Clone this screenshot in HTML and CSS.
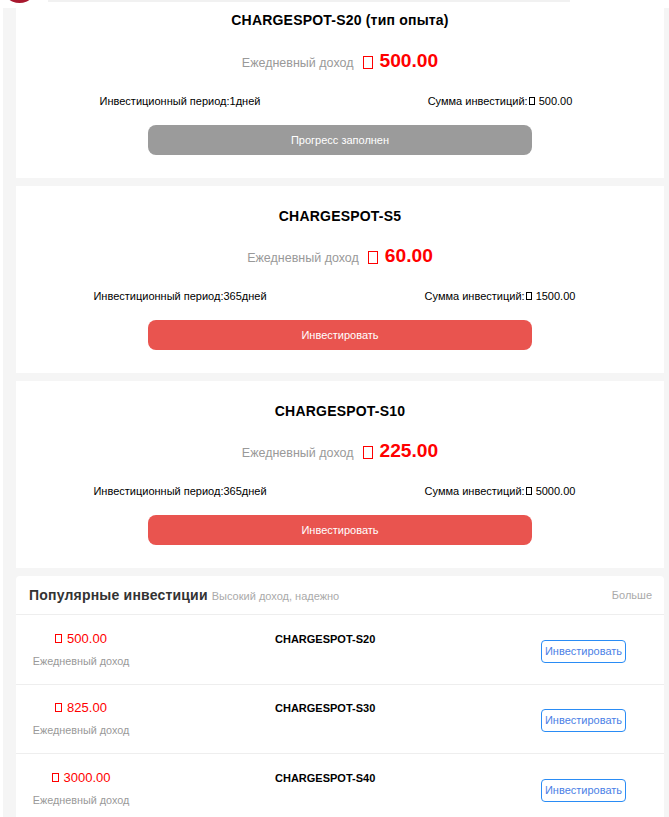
FILE: index.html
```html
<!DOCTYPE html>
<html lang="ru">
<head>
<meta charset="utf-8">
<title>Инвестиции</title>
<link rel="stylesheet" href="styles.css">
</head>
<body>
<header class="topbar">
  <span class="logo"></span>
  <span class="search"></span>
</header>
<main class="list">
  <section class="card product first">
    <div class="title">CHARGESPOT-S20 (тип опыта)</div>
    <div class="income"><span class="income-label">Ежедневный доход</span><span class="tofu"></span><span class="income-value">500.00</span></div>
    <div class="terms"><span>Инвестиционный период:1дней</span><span>Сумма инвестиций:<span class="tofu small"></span>500.00</span></div>
    <div class="btn done">Прогресс заполнен</div>
  </section>
  <section class="card product">
    <div class="title">CHARGESPOT-S5</div>
    <div class="income"><span class="income-label">Ежедневный доход</span><span class="tofu"></span><span class="income-value">60.00</span></div>
    <div class="terms"><span>Инвестиционный период:365дней</span><span>Сумма инвестиций:<span class="tofu small"></span>1500.00</span></div>
    <div class="btn">Инвестировать</div>
  </section>
  <section class="card product">
    <div class="title">CHARGESPOT-S10</div>
    <div class="income"><span class="income-label">Ежедневный доход</span><span class="tofu"></span><span class="income-value">225.00</span></div>
    <div class="terms"><span>Инвестиционный период:365дней</span><span>Сумма инвестиций:<span class="tofu small"></span>5000.00</span></div>
    <div class="btn">Инвестировать</div>
  </section>
  <section class="card popular">
    <div class="pop-head">
      <div class="pop-title"><span class="pop-main">Популярные инвестиции</span><span class="pop-sub">Высокий доход, надежно</span></div>
      <span class="pop-more">Больше</span>
    </div>
    <div class="pop-row">
      <div class="pop-income"><div class="pop-price"><span class="tofu mini"></span>500.00</div><div class="pop-label">Ежедневный доход</div></div>
      <div class="pop-name">CHARGESPOT-S20</div>
      <div class="pop-btn">Инвестировать</div>
    </div>
    <div class="pop-row">
      <div class="pop-income"><div class="pop-price"><span class="tofu mini"></span>825.00</div><div class="pop-label">Ежедневный доход</div></div>
      <div class="pop-name">CHARGESPOT-S30</div>
      <div class="pop-btn">Инвестировать</div>
    </div>
    <div class="pop-row">
      <div class="pop-income"><div class="pop-price"><span class="tofu mini"></span>3000.00</div><div class="pop-label">Ежедневный доход</div></div>
      <div class="pop-name">CHARGESPOT-S40</div>
      <div class="pop-btn">Инвестировать</div>
    </div>
  </section>
</main>
</body>
</html>
```
FILE: styles.css
```css
html, body {
  margin: 0;
  padding: 0;
}
body {
  background: #fff;
  font-family: "Liberation Sans", Arial, sans-serif;
  color: #000;
  overflow: hidden;
  height: 817px;
}
.topbar {
  height: 8px;
  background: #fff;
  display: flex;
  align-items: flex-start;
  overflow: hidden;
}
.logo {
  width: 35px;
  height: 35px;
  border-radius: 50%;
  background: #a8182e;
  margin-top: -32.5px;
  margin-left: 1.5px;
  flex: none;
}
.search {
  width: 522px;
  height: 2px;
  background: #f1f1f1;
  margin-left: 11.5px;
  flex: none;
}
.list {
  margin-left: 3px;
  background: #f5f5f5;
  padding: 0 5px 20px 13px;
  display: flex;
  flex-direction: column;
  gap: 8px;
}
.card {
  background: #fff;
}
.product {
  padding: 20px 4px 23px;
  text-align: center;
}
.product.first {
  padding-top: 2px;
}
.title {
  font-size: 14px;
  font-weight: bold;
  line-height: 20px;
  letter-spacing: 0.2px;
}
.income {
  margin-top: 15px;
  height: 30px;
  display: flex;
  justify-content: center;
  align-items: center;
  line-height: 30px;
}
.first .income {
  margin-top: 16px;
}
.income-label {
  font-size: 12.5px;
  color: #999;
  margin-top: 3px;
}
.tofu {
  display: inline-block;
  width: 10px;
  height: 13px;
  border: 1.5px solid #f00;
  box-sizing: border-box;
  margin: 2px 7px 0 9px;
}
.income-value {
  font-size: 19.2px;
  font-weight: bold;
  color: #f00;
}
.tofu.small {
  width: 6px;
  height: 8px;
  border: 1px solid #000;
  margin: 0 4px 0 1px;
  vertical-align: 0;
}
.tofu.mini {
  width: 7px;
  height: 9px;
  border: 1px solid #f00;
  margin: 0 5px 0 0;
  vertical-align: 0;
}
.terms {
  margin-top: 17px;
  display: grid;
  grid-template-columns: 1fr 1fr;
  font-size: 11px;
  line-height: 16px;
}
.btn {
  width: 60%;
  margin: 16px auto 0;
  height: 30px;
  border-radius: 8px;
  background: #e9544f;
  color: #fff;
  font-size: 11px;
  line-height: 30px;
}
.btn.done {
  background: #9b9b9b;
}
.popular {
  border-radius: 4px 4px 0 0;
}
.pop-head {
  height: 38px;
  padding: 0 12px 0 13px;
  display: flex;
  align-items: center;
  justify-content: space-between;
  border-bottom: 1px solid #eee;
}
.pop-title {
  display: flex;
  align-items: baseline;
}
.pop-main {
  font-size: 14px;
  font-weight: bold;
  color: #333;
  letter-spacing: 0.2px;
}
.pop-sub {
  font-size: 11px;
  color: #aaa;
  margin-left: 4px;
}
.pop-more {
  font-size: 11px;
  color: #aaa;
}
.pop-row {
  display: flex;
  align-items: center;
  padding: 15.5px 38px 15px 16px;
  border-bottom: 1px solid #eee;
}
.pop-income {
  width: 98px;
  text-align: center;
  white-space: nowrap;
}
.pop-price {
  font-size: 13px;
  line-height: 16px;
  color: #f00;
}
.pop-label {
  font-size: 10.8px;
  line-height: 16px;
  color: #999;
  margin-top: 6px;
}
.pop-name {
  align-self: flex-start;
  margin-left: 145px;
  font-size: 11px;
  font-weight: bold;
  line-height: 16px;
}
.pop-btn {
  margin-left: auto;
  margin-top: 3px;
  width: 85px;
  height: 23px;
  box-sizing: border-box;
  border: 1px solid #2a8cf5;
  border-radius: 4px;
  color: #4b7fe6;
  font-size: 11px;
  line-height: 21px;
  text-align: center;
}
```
